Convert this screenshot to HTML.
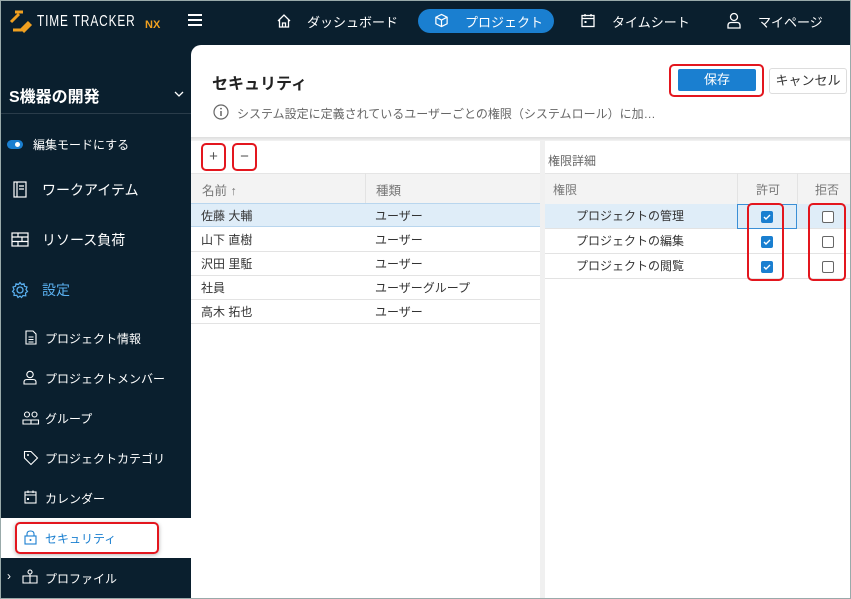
<!DOCTYPE html>
<html><head><meta charset="utf-8"><style>
*{box-sizing:border-box;margin:0;padding:0}
body{width:851px;height:599px;overflow:hidden;font-family:"Liberation Sans","Noto Sans CJK JP",sans-serif;background:#0a1f2e;position:relative;font-size:13px;color:#333}
.frame{position:absolute;inset:0;border:1px solid #9aa;z-index:50;pointer-events:none}
.top{position:absolute;left:0;top:0;width:851px;height:45px;background:#0a1f2e;color:#fff}
.abs{position:absolute}
.nav{position:absolute;top:12px;font-size:13px;color:#fff;display:flex;align-items:center}
.side{position:absolute;left:0;top:45px;width:191px;height:554px;background:#0a1f2e;color:#fff}
.si{position:absolute;display:flex;align-items:center;color:#fff}
.main{position:absolute;left:191px;top:45px;width:660px;height:554px;background:#fff;border-top-left-radius:10px;overflow:hidden}
.red{position:absolute;border:2px solid #e3161e;border-radius:5px}
.cb{position:absolute;width:12px;height:12px;border-radius:2px}
.cb.on{background:#1a7fd0}
.cb.off{border:1.5px solid #666;background:#fff}
.row{position:absolute;left:0;height:24px;border-bottom:1px solid #e3e3e3;font-size:12px;line-height:24px}
.sub{font-size:12px}
</style></head><body>
<div class="top">
 <svg class="abs" style="left:9px;top:10px" width="24" height="24" viewBox="0 0 24 24"><path d="M2 12 L10 4 M6 2 L14 2" stroke="#f0a020" stroke-width="3" fill="none"/><path d="M4 20 L12 20 L20 12 M14 22 L22 14" stroke="#f0a020" stroke-width="3" fill="none"/></svg>
 <div class="abs" style="left:37px;top:13px;font-size:16px;letter-spacing:1.2px;color:#fff;transform:scaleX(0.74);transform-origin:left">TIME TRACKER</div>
 <div class="abs" style="left:145px;top:19px;font-size:11px;color:#f0a020;font-weight:bold">NX</div>
 <div class="abs" style="left:188px;top:14px;width:14px;height:2px;background:#fff;box-shadow:0 5px 0 #fff,0 10px 0 #fff"></div>
 <svg class="abs" style="left:276px;top:13px" width="16" height="16" viewBox="0 0 16 16"><path d="M2 8 L8 2 L14 8 M3.5 7 V14 H12.5 V7 M6.5 14 V10 H9.5 V14" stroke="#fff" stroke-width="1.3" fill="none"/></svg>
 <div class="nav" style="left:307px">ダッシュボード</div>
 <div class="abs" style="left:418px;top:9px;width:136px;height:24px;background:#1a7fd0;border-radius:12px"></div>
 <svg class="abs" style="left:434px;top:13px" width="15" height="15" viewBox="0 0 16 16"><path d="M8 1.5 L14 4.5 V11.5 L8 14.5 L2 11.5 V4.5 Z M2 4.5 L8 7.5 L14 4.5 M8 7.5 V14.5" stroke="#fff" stroke-width="1.3" fill="none"/></svg>
 <div class="nav" style="left:465px">プロジェクト</div>
 <svg class="abs" style="left:581px;top:13px" width="14" height="15" viewBox="0 0 14 15"><rect x="1" y="2.5" width="12" height="11" stroke="#fff" stroke-width="1.3" fill="none"/><path d="M1 5.5 H13 M4 1 V3.5 M10 1 V3.5" stroke="#fff" stroke-width="1.3"/><rect x="3.5" y="8" width="2" height="2" fill="#fff"/></svg>
 <div class="nav" style="left:612px">タイムシート</div>
 <svg class="abs" style="left:727px;top:12px" width="14" height="17" viewBox="0 0 14 17"><circle cx="7" cy="5" r="3.5" stroke="#fff" stroke-width="1.3" fill="none"/><path d="M1 16 V13.5 Q1 10.5 4 10.5 H10 Q13 10.5 13 13.5 V16 Z" stroke="#fff" stroke-width="1.3" fill="none"/></svg>
 <div class="nav" style="left:758px">マイページ</div>
</div>
<div class="side">
 <div class="si" style="left:9px;top:38px;font-size:16px;font-weight:bold">S機器の開発</div>
 <svg class="abs" style="left:174px;top:46px" width="10" height="6" viewBox="0 0 10 6"><path d="M1 1 L5 5 L9 1" stroke="#fff" stroke-width="1.3" fill="none"/></svg>
 <div class="abs" style="left:0;top:68px;width:191px;height:1px;background:#2a3c4a"></div>
 <div class="abs" style="left:7px;top:95px;width:16px;height:9px;background:#1a7fd0;border-radius:5px"></div>
 <div class="abs" style="left:15px;top:97px;width:5px;height:5px;background:#fff;border-radius:50%"></div>
 <div class="si sub" style="left:33px;top:91px">編集モードにする</div>
 <svg class="abs" style="left:13px;top:136px" width="14" height="17" viewBox="0 0 14 17"><rect x="1" y="1" width="12" height="15" stroke="#fff" stroke-width="1.2" fill="none"/><path d="M4 1 V16 M6 5 H11 M6 8 H11" stroke="#fff" stroke-width="1.2"/></svg>
 <div class="si" style="left:42px;top:135px;font-size:14px">ワークアイテム</div>
 <svg class="abs" style="left:11px;top:187px" width="18" height="15" viewBox="0 0 18 15"><rect x="1" y="1" width="16" height="13" stroke="#fff" stroke-width="1.2" fill="none"/><path d="M1 5 H17 M1 9.5 H17 M7 1 V5 M11 5 V9.5 M7 9.5 V14" stroke="#fff" stroke-width="1.2"/></svg>
 <div class="si" style="left:42px;top:185px;font-size:14px">リソース負荷</div>
 <svg class="abs" style="left:11px;top:236px" width="18" height="18" viewBox="0 0 18 18"><circle cx="9" cy="9" r="3" stroke="#5ab0f0" stroke-width="1.3" fill="none"/><path d="M9 1.5 L10.5 3.5 L13 2.8 L13.5 5.3 L16 6 L15 8.5 L16.5 10.5 L14.5 12 L14.8 14.8 L12 14.5 L10.5 16.5 L9 15 L7 16.5 L5.8 14.3 L3 14.5 L3.3 12 L1.5 10.5 L3 8.5 L2 6 L4.5 5.3 L5 2.8 L7.5 3.5 Z" stroke="#5ab0f0" stroke-width="1.2" fill="none"/></svg>
 <div class="si" style="left:42px;top:235px;font-size:14px;color:#5ab0f0">設定</div>
 <svg class="abs" style="left:25px;top:285px" width="12" height="15" viewBox="0 0 12 15"><path d="M1 1 H8 L11 4 V14 H1 Z M3.5 7 H8.5 M3.5 9.5 H8.5 M3.5 12 H8.5" stroke="#fff" stroke-width="1.1" fill="none"/></svg>
 <div class="si sub" style="left:45px;top:285px">プロジェクト情報</div>
 <svg class="abs" style="left:23px;top:325px" width="14" height="15" viewBox="0 0 14 15"><circle cx="7" cy="4.5" r="3.2" stroke="#fff" stroke-width="1.1" fill="none"/><path d="M1 14 V12 Q1 9.5 4 9.5 H10 Q13 9.5 13 12 V14 Z" stroke="#fff" stroke-width="1.1" fill="none"/></svg>
 <div class="si sub" style="left:45px;top:325px">プロジェクトメンバー</div>
 <svg class="abs" style="left:22px;top:366px" width="18" height="14" viewBox="0 0 18 14"><circle cx="5" cy="3.5" r="2.5" stroke="#fff" stroke-width="1.1" fill="none"/><circle cx="12.5" cy="3.5" r="2.5" stroke="#fff" stroke-width="1.1" fill="none"/><path d="M1 13 V9 H9 V13 Z M9 13 V9 H16.5 V13 Z" stroke="#fff" stroke-width="1.1" fill="none"/></svg>
 <div class="si sub" style="left:45px;top:365px">グループ</div>
 <svg class="abs" style="left:23px;top:405px" width="16" height="16" viewBox="0 0 16 16"><path d="M1.5 1.5 H8 L14.5 8 L8 14.5 L1.5 8 Z" stroke="#fff" stroke-width="1.1" fill="none"/><circle cx="5" cy="5" r="1" fill="#fff"/></svg>
 <div class="si sub" style="left:45px;top:405px">プロジェクトカテゴリ</div>
 <svg class="abs" style="left:24px;top:445px" width="13" height="14" viewBox="0 0 13 14"><rect x="1" y="2" width="11" height="11" stroke="#fff" stroke-width="1.1" fill="none"/><path d="M1 5 H12 M4 0.5 V3 M9 0.5 V3" stroke="#fff" stroke-width="1.1"/><rect x="3" y="8" width="2" height="2" fill="#fff"/></svg>
 <div class="si sub" style="left:45px;top:445px">カレンダー</div>
 <div class="abs" style="left:0;top:473px;width:191px;height:40px;background:#fff"></div>
 <div class="red" style="left:15px;top:477px;width:144px;height:32px;box-shadow:0 1px 4px rgba(0,0,0,.3)"></div>
 <svg class="abs" style="left:24px;top:485px" width="13" height="15" viewBox="0 0 13 15"><rect x="1" y="6" width="11" height="8" stroke="#1a7fd0" stroke-width="1.1" fill="none"/><path d="M3 6 V4 Q3 1 6.5 1 Q10 1 10 4 V6" stroke="#1a7fd0" stroke-width="1.1" fill="none"/><circle cx="6.5" cy="10" r="1" fill="#1a7fd0"/></svg>
 <div class="si sub" style="left:45px;top:485px;color:#1a7fd0">セキュリティ</div>
 <div class="si" style="left:7px;top:524px;font-size:12px">›</div>
 <svg class="abs" style="left:22px;top:524px" width="16" height="15" viewBox="0 0 16 15"><circle cx="8" cy="3" r="2" stroke="#fff" stroke-width="1.1" fill="none"/><path d="M1 7 H15 V14 H1 Z M8 5 V14" stroke="#fff" stroke-width="1.1" fill="none"/></svg>
 <div class="si sub" style="left:45px;top:525px">プロファイル</div>
</div>
<div class="main">
 <div class="abs" style="left:21px;top:25px;font-size:16px;font-weight:bold;color:#222">セキュリティ</div>
 <svg class="abs" style="left:22px;top:59px" width="16" height="16" viewBox="0 0 16 16"><circle cx="8" cy="8" r="7" stroke="#666" stroke-width="1.2" fill="none"/><path d="M8 7 V12" stroke="#666" stroke-width="1.5"/><circle cx="8" cy="4.6" r="0.9" fill="#666"/></svg>
 <div class="abs" style="left:46px;top:60px;font-size:12px;color:#666">システム設定に定義されているユーザーごとの権限（システムロール）に加…</div>
 <div class="red" style="left:478px;top:19px;width:95px;height:33px"></div>
 <div class="abs" style="left:487px;top:24px;width:78px;height:22px;background:#1a7fd0;border-radius:2px;color:#fff;text-align:center;line-height:22px;font-size:13px">保存</div>
 <div class="abs" style="left:578px;top:23px;width:78px;height:26px;border:1px solid #ddd;border-radius:3px;text-align:center;line-height:24px;font-size:13px;color:#333;background:#fff">キャンセル</div>
 <div class="abs" style="left:0;top:92px;width:660px;height:4px;background:linear-gradient(#ddd,#f2f2f2)"></div>
 <div class="red" style="left:10px;top:98px;width:25px;height:28px"></div>
 <div class="abs" style="left:10px;top:98px;width:25px;height:28px;font-size:15px;color:#555;text-align:center;line-height:27px">+</div>
 <div class="red" style="left:41px;top:98px;width:25px;height:28px"></div>
 <div class="abs" style="left:41px;top:98px;width:25px;height:28px;font-size:15px;color:#555;text-align:center;line-height:27px">−</div>
 <div class="abs" style="left:0;top:128px;width:349px;height:30px;background:#f3f3f3;border-top:1px solid #e5e5e5"></div>
 <div class="abs" style="left:174px;top:128px;width:1px;height:30px;background:#e3e3e3"></div>
 <div class="abs" style="left:11px;top:135px;font-size:12.5px;color:#777">名前 ↑</div>
 <div class="abs" style="left:185px;top:135px;font-size:12.5px;color:#777">種類</div>
 <div class="row" style="top:158px;width:349px;background:#dfedf8;border-top:1px solid #b9d6ee;border-bottom:1px solid #b9d6ee"><span style="position:absolute;left:10px">佐藤 大輔</span><span style="position:absolute;left:184px">ユーザー</span></div>
 <div class="row" style="top:183px;width:349px"><span style="position:absolute;left:10px">山下 直樹</span><span style="position:absolute;left:184px">ユーザー</span></div>
 <div class="row" style="top:207px;width:349px"><span style="position:absolute;left:10px">沢田 里駈</span><span style="position:absolute;left:184px">ユーザー</span></div>
 <div class="row" style="top:231px;width:349px"><span style="position:absolute;left:10px">社員</span><span style="position:absolute;left:184px">ユーザーグループ</span></div>
 <div class="row" style="top:255px;width:349px"><span style="position:absolute;left:10px">高木 拓也</span><span style="position:absolute;left:184px">ユーザー</span></div>
 <div class="abs" style="left:349px;top:96px;width:5px;height:458px;background:#f0f0f0"></div>
 <div class="abs" style="left:357px;top:107px;font-size:12px;color:#666">権限詳細</div>
 <div class="abs" style="left:354px;top:128px;width:306px;height:31px;background:#f3f3f3;border-top:1px solid #e5e5e5"></div>
 <div class="abs" style="left:546px;top:128px;width:1px;height:31px;background:#e3e3e3"></div>
 <div class="abs" style="left:606px;top:128px;width:1px;height:31px;background:#e3e3e3"></div>
 <div class="abs" style="left:362px;top:136px;font-size:12px;color:#777">権限</div>
 <div class="abs" style="left:565px;top:136px;font-size:12px;color:#777">許可</div>
 <div class="abs" style="left:624px;top:136px;font-size:12px;color:#777">拒否</div>
 <div class="row" style="left:354px;top:159px;width:306px;height:25px;background:#dfedf8"><span style="position:absolute;left:31px">プロジェクトの管理</span></div>
 <div class="abs" style="left:546px;top:159px;width:60px;height:25px;border:1px solid #3a8fd6"></div>
 <div class="row" style="left:354px;top:184px;width:306px;height:25px"><span style="position:absolute;left:31px">プロジェクトの編集</span></div>
 <div class="row" style="left:354px;top:209px;width:306px;height:25px"><span style="position:absolute;left:31px">プロジェクトの閲覧</span></div>
 <svg class="abs" style="left:570px;top:166px" width="12" height="12"><rect width="12" height="12" rx="2" fill="#1a7fd0"/><path d="M3 6 L5 8 L9 4" stroke="#fff" stroke-width="1.4" fill="none"/></svg>
 <svg class="abs" style="left:570px;top:191px" width="12" height="12"><rect width="12" height="12" rx="2" fill="#1a7fd0"/><path d="M3 6 L5 8 L9 4" stroke="#fff" stroke-width="1.4" fill="none"/></svg>
 <svg class="abs" style="left:570px;top:216px" width="12" height="12"><rect width="12" height="12" rx="2" fill="#1a7fd0"/><path d="M3 6 L5 8 L9 4" stroke="#fff" stroke-width="1.4" fill="none"/></svg>
 <div class="cb off" style="left:631px;top:166px"></div>
 <div class="cb off" style="left:631px;top:191px"></div>
 <div class="cb off" style="left:631px;top:216px"></div>
 <div class="red" style="left:556px;top:158px;width:37px;height:78px"></div>
 <div class="red" style="left:617px;top:158px;width:38px;height:78px"></div>
</div>
<div class="frame"></div>
</body></html>
